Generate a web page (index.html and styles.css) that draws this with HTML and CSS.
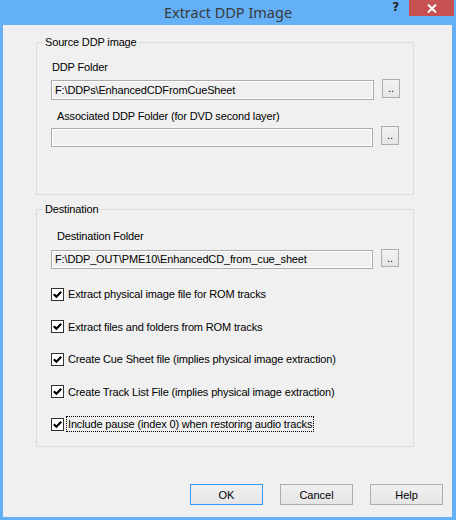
FILE: index.html
```html
<!DOCTYPE html>
<html>
<head>
<meta charset="utf-8">
<title>Extract DDP Image</title>
<link rel="stylesheet" href="styles.css">
</head>
<body>
<div class="window">
  <div class="titlebar">
    <div></div>
    <div class="title">Extract DDP Image</div>
    <div class="controls">
      <span class="help">?</span>
      <span class="close"><svg width="10" height="9" viewBox="0 0 10 9"><path d="M1 0.5 L9 8.5 M9 0.5 L1 8.5" stroke="#fff" stroke-width="2" fill="none"/></svg></span>
    </div>
  </div>
  <div class="client">
    <div class="group group-source">
      <span class="group-title">Source DDP image</span>
      <div class="label label-ddp">DDP Folder</div>
      <div class="row row-ddp">
        <div class="input">F:\DDPs\EnhancedCDFromCueSheet</div>
        <button class="browse">..</button>
      </div>
      <div class="label label-assoc">Associated DDP Folder (for DVD second layer)</div>
      <div class="row row-assoc">
        <div class="input"></div>
        <button class="browse">..</button>
      </div>
    </div>
    <div class="group group-dest">
      <span class="group-title">Destination</span>
      <div class="label label-dest">Destination Folder</div>
      <div class="row row-dest">
        <div class="input">F:\DDP_OUT\PME10\EnhancedCD_from_cue_sheet</div>
        <button class="browse">..</button>
      </div>
      <div class="checks">
        <div class="check"><span class="box"><svg width="11" height="11" viewBox="0 0 11 11"><path d="M1.8 5.2 L4.4 7.8 L9.2 2.8" stroke="#000" stroke-width="2.2" fill="none"/></svg></span><span class="ctext">Extract physical image file for ROM tracks</span></div>
        <div class="check"><span class="box"><svg width="11" height="11" viewBox="0 0 11 11"><path d="M1.8 5.2 L4.4 7.8 L9.2 2.8" stroke="#000" stroke-width="2.2" fill="none"/></svg></span><span class="ctext">Extract files and folders from ROM tracks</span></div>
        <div class="check"><span class="box"><svg width="11" height="11" viewBox="0 0 11 11"><path d="M1.8 5.2 L4.4 7.8 L9.2 2.8" stroke="#000" stroke-width="2.2" fill="none"/></svg></span><span class="ctext">Create Cue Sheet file (implies physical image extraction)</span></div>
        <div class="check"><span class="box"><svg width="11" height="11" viewBox="0 0 11 11"><path d="M1.8 5.2 L4.4 7.8 L9.2 2.8" stroke="#000" stroke-width="2.2" fill="none"/></svg></span><span class="ctext">Create Track List File (implies physical image extraction)</span></div>
        <div class="check"><span class="box"><svg width="11" height="11" viewBox="0 0 11 11"><path d="M1.8 5.2 L4.4 7.8 L9.2 2.8" stroke="#000" stroke-width="2.2" fill="none"/></svg></span><span class="ctext focused">Include pause (index 0) when restoring audio tracks</span></div>
      </div>
    </div>
    <div class="actions">
      <button class="btn btn-default">OK</button>
      <button class="btn">Cancel</button>
      <button class="btn">Help</button>
    </div>
  </div>
</div>
</body>
</html>
```

FILE: styles.css
```css
* { box-sizing: border-box; }
html, body { margin: 0; padding: 0; }
body {
  width: 456px;
  height: 520px;
  overflow: hidden;
  font-family: "Liberation Sans", Arial, sans-serif;
  font-size: 11px;
  letter-spacing: -0.15px;
  color: #000;
}
.window {
  width: 456px;
  height: 520px;
  background: #63b0f6;
  padding: 0 4px 3px 3px;
  display: flex;
  flex-direction: column;
}
.titlebar {
  height: 25px;
  display: grid;
  grid-template-columns: 1fr auto 1fr;
  margin: 0 -4px 0 -3px;
}
.title {
  font-family: "Noto Sans", "Open Sans", sans-serif;
  font-size: 14.5px;
  letter-spacing: 0;
  color: #3a3a3a;
  line-height: 24px;
  white-space: nowrap;
}
.controls {
  justify-self: end;
  display: flex;
  align-items: flex-start;
  margin-right: 2px;
}
.help {
  font-family: "DejaVu Sans", sans-serif;
  font-weight: bold;
  font-size: 12px;
  line-height: 14px;
  color: #222;
  margin-top: 0;
  margin-right: 10px;
}
.close {
  width: 45px;
  height: 16px;
  background: #c75050;
  display: flex;
  align-items: center;
  justify-content: center;
}
.close svg { display: block; }
.client {
  flex: 1;
  background: #f0f0f0;
  display: flex;
  flex-direction: column;
}
.group {
  position: relative;
  border: 1px solid #dcdcdc;
  width: 378px;
  margin-left: 33px;
}
.group-source { margin-top: 17px; height: 153px; }
.group-dest { margin-top: 14px; height: 238px; }
.group-title {
  position: absolute;
  top: -7px;
  left: 6px;
  padding: 0 2px;
  line-height: 13px;
  background: #f0f0f0;
}
.label { line-height: 13px; white-space: nowrap; }
.label-ddp { margin: 18px 0 0 15px; }
.label-assoc { margin: 10px 0 0 20px; }
.label-dest { margin: 20px 0 0 20px; }
.row {
  display: flex;
  align-items: flex-start;
  gap: 8px;
  margin-left: 14px;
}
.row-ddp { margin-top: 5px; }
.row-assoc { margin-top: 3px; }
.row-dest { margin-top: 6px; }
.input {
  width: 322px;
  border: 1px solid #acacac;
  box-shadow: inset 0 0 0 1px #fff;
  background: #f0f0f0;
  padding: 0 0 0 3px;
  white-space: nowrap;
  overflow: hidden;
}
.row-ddp .input { width: 323px; height: 20px; margin-top: 1px; line-height: 18px; }
.row-assoc .input { height: 19px; margin-top: 2px; line-height: 17px; }
.row-dest .input { height: 19px; margin-top: 1px; line-height: 17px; }
.browse {
  width: 18px;
  height: 19px;
  padding: 0;
  border: 1px solid #acacac;
  background: linear-gradient(#f2f2f2, #e5e5e5);
  font-family: "Liberation Sans", Arial, sans-serif;
  font-size: 11px;
  line-height: 15px;
  color: #000;
  text-align: center;
}
.row-dest .browse { height: 18px; }
.checks {
  display: flex;
  flex-direction: column;
  gap: 16.5px;
  margin: 17px 0 0 14px;
}
.check {
  display: flex;
  align-items: center;
  height: 16px;
  gap: 2px;
}
.box {
  width: 13px;
  height: 13px;
  border: 1px solid #333;
  background: #fff;
  display: flex;
  align-items: center;
  justify-content: center;
}
.box svg { display: block; }
.ctext {
  line-height: 14px;
  padding: 0 1px;
  border: 1px dotted transparent;
  white-space: nowrap;
}
.ctext.focused { border-color: #000; }
.actions {
  display: flex;
  justify-content: flex-end;
  gap: 17px;
  margin: 37px 9px 0 0;
}
.btn {
  width: 73px;
  height: 21px;
  padding: 0;
  border: 1px solid #acacac;
  background: linear-gradient(#f0f0f0, #e5e5e5);
  font-family: "Liberation Sans", Arial, sans-serif;
  font-size: 11px;
  color: #000;
}
.btn-default { border-color: #3399ff; }
```
